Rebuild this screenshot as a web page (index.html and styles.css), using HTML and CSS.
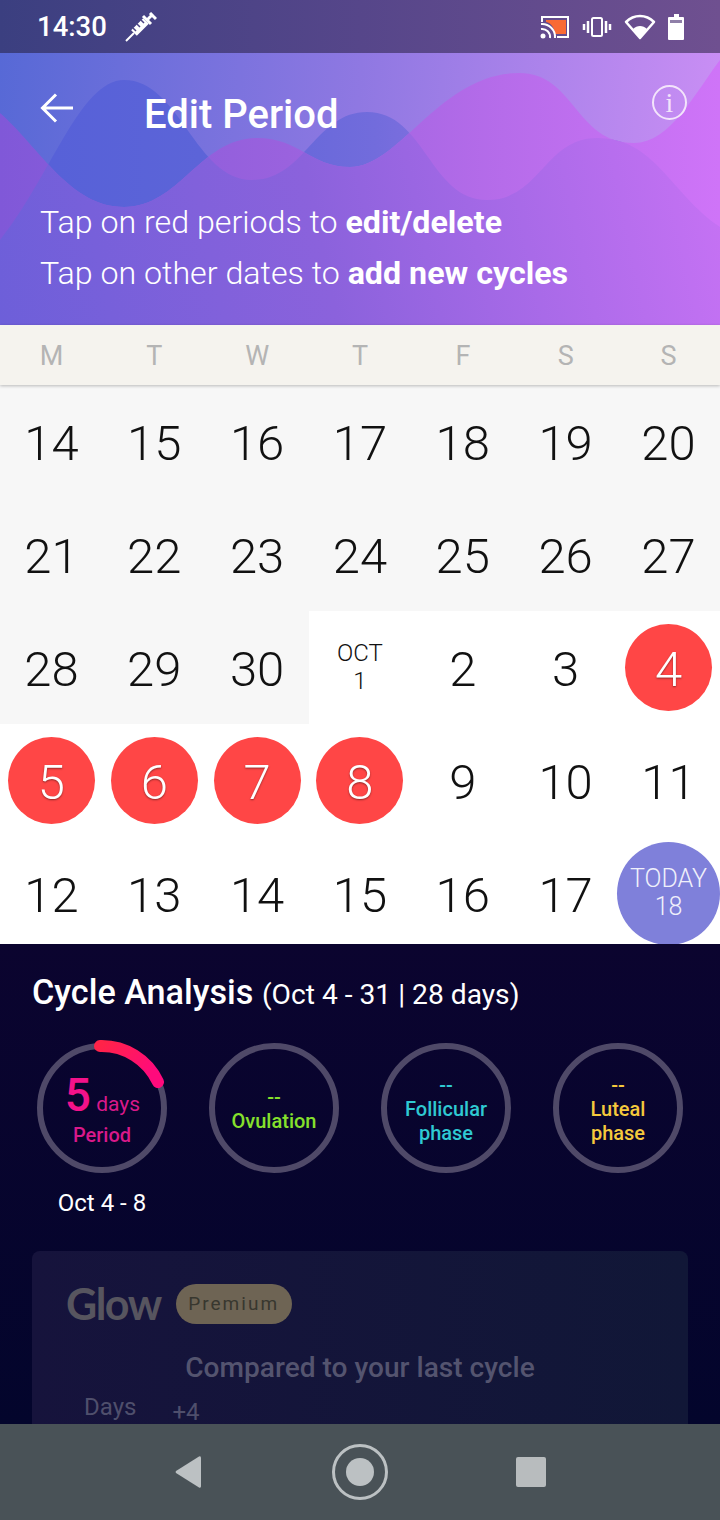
FILE: index.html
```html
<!DOCTYPE html>
<html>
<head>
    <meta charset="UTF-8">
    <title>Edit Period</title>
    <link rel="stylesheet" href="styles.css">
</head>
<body>
<div class="phone">
    <div class="status-bar">
        <div class="status-left">
            <span class="time">14:30</span>
            <svg class="syringe" width="32" height="30" viewBox="0 0 32 30">
                <path d="M1 29L9 21" stroke="#fff" stroke-width="2" fill="none"/>
                <path d="M9 21L21 9" stroke="#fff" stroke-width="8" fill="none"/>
                <path d="M23 7L28 2M25 1L31 7M18 4L26 12" stroke="#fff" stroke-width="3" fill="none"/>
                <path d="M8 16L11 19M12 12L15 15M16 8L19 11" stroke="#4a4283" stroke-width="1.5" fill="none"/>
            </svg>
        </div>
        <div class="status-right">
            <svg width="30" height="24" viewBox="0 0 30 24">
                <path d="M2 7V2H28V22H17" stroke="#fff" stroke-width="2" fill="none"/>
                <path d="M6 5H26V19H15C14 12 11 8 6 7Z" fill="#f96a35"/>
                <circle cx="3" cy="21" r="2.5" fill="#fff"/>
                <path d="M1 14A8 8 0 0 1 10 23M1 9A13 13 0 0 1 15 23" stroke="#fff" stroke-width="2" fill="none"/>
            </svg>
            <svg width="30" height="20" viewBox="0 0 30 20">
                <rect x="10" y="1" width="10" height="18" rx="1.5" stroke="#fff" stroke-width="2" fill="none"/>
                <path d="M6 4V16M24 4V16M2 7V13M28 7V13" stroke="#fff" stroke-width="2.5" fill="none"/>
            </svg>
            <svg width="32" height="26" viewBox="0 0 32 26">
                <path d="M2 8C10 0 22 0 30 8L16 24Z" stroke="#fff" stroke-width="2.5" stroke-linejoin="round" fill="none"/>
                <path d="M9 15C13 11 19 11 23 15L16 24Z" fill="#fff"/>
            </svg>
            <svg width="16" height="26" viewBox="0 0 16 26">
                <path d="M6 0H11V3H15A1 1 0 0 1 16 4V25A1 1 0 0 1 15 26H1A1 1 0 0 1 0 25V4A1 1 0 0 1 1 3H6Z" fill="#fff"/>
                <rect x="2" y="6" width="12" height="3" fill="#8f7fa8"/>
            </svg>
        </div>
    </div>

    <div class="header">
        <svg class="waves" width="720" height="272" viewBox="0 0 720 272">
            <defs>
                <linearGradient id="topGrad" gradientUnits="userSpaceOnUse" x1="0" y1="0" x2="720" y2="60">
                    <stop offset="0" stop-color="#5769d6"/>
                    <stop offset="0.5" stop-color="#8f78e2"/>
                    <stop offset="1" stop-color="#c98ef4"/>
                </linearGradient>
                <linearGradient id="blueGrad" gradientUnits="userSpaceOnUse" x1="0" y1="0" x2="500" y2="0">
                    <stop offset="0" stop-color="#5560d8"/>
                    <stop offset="0.4" stop-color="#5c64d8"/>
                    <stop offset="0.75" stop-color="#726cdc"/>
                    <stop offset="1" stop-color="#8f72e2"/>
                </linearGradient>
                <linearGradient id="pinkGrad" gradientUnits="userSpaceOnUse" x1="0" y1="0" x2="720" y2="0">
                    <stop offset="0" stop-color="#8058d8"/>
                    <stop offset="0.4" stop-color="#9a62de"/>
                    <stop offset="0.7" stop-color="#b66cea"/>
                    <stop offset="1" stop-color="#cf74f8"/>
                </linearGradient>
                <linearGradient id="baseGrad" gradientUnits="userSpaceOnUse" x1="0" y1="272" x2="720" y2="120">
                    <stop offset="0" stop-color="#6d5fd9"/>
                    <stop offset="0.45" stop-color="#8b62dc"/>
                    <stop offset="1" stop-color="#c672f4"/>
                </linearGradient>
                <clipPath id="belowFront">
                    <path d="M0 187C50 125 80 27 124 27C180 27 195 127 252 127C305 127 315 59 367 59C425 59 430 147 487 147C540 147 545 85 597 85C655 85 670 140 720 174V272H0Z"/>
                </clipPath>
            </defs>
            <rect width="720" height="272" fill="url(#topGrad)"/>
            <path d="M0 187C50 125 80 27 124 27C180 27 195 127 252 127C305 127 315 59 367 59C425 59 430 147 487 147C540 147 545 85 597 85C655 85 670 140 720 174V272H0Z" fill="url(#blueGrad)"/>
            <path d="M0 60C40 95 70 154 124 154C180 154 200 85 257 85C300 85 310 114 350 114C400 114 440 20 519 20C575 20 575 90 634 90C670 90 695 40 720 7V272H0Z" fill="url(#pinkGrad)"/>
            <path d="M0 60C40 95 70 154 124 154C180 154 200 85 257 85C300 85 310 114 350 114C400 114 440 20 519 20C575 20 575 90 634 90C670 90 695 40 720 7V272H0Z" fill="url(#baseGrad)" clip-path="url(#belowFront)"/>
        </svg>
        <div class="title-row">
            <svg class="back-arrow" width="34" height="30" viewBox="0 0 34 30">
                <path d="M33 15H3M16 1.5L2.5 15L16 28.5" stroke="#fff" stroke-width="3" fill="none"/>
            </svg>
            <h1 class="title">Edit Period</h1>
            <span class="info">i</span>
        </div>
        <p class="hint">Tap on red periods to <b>edit/delete</b></p>
        <p class="hint">Tap on other dates to <b>add new cycles</b></p>
    </div>

    <div class="weekdays">
        <span>M</span><span>T</span><span>W</span><span>T</span><span>F</span><span>S</span><span>S</span>
    </div>

    <div class="calendar">
        <div class="day past">14</div><div class="day past">15</div><div class="day past">16</div><div class="day past">17</div><div class="day past">18</div><div class="day past">19</div><div class="day past">20</div>
        <div class="day past">21</div><div class="day past">22</div><div class="day past">23</div><div class="day past">24</div><div class="day past">25</div><div class="day past">26</div><div class="day past">27</div>
        <div class="day past">28</div><div class="day past">29</div><div class="day past">30</div>
        <div class="day month-start"><span>OCT</span><span>1</span></div>
        <div class="day">2</div><div class="day">3</div>
        <div class="day"><span class="period">4</span></div>
        <div class="day"><span class="period">5</span></div><div class="day"><span class="period">6</span></div><div class="day"><span class="period">7</span></div><div class="day"><span class="period">8</span></div>
        <div class="day">9</div><div class="day">10</div><div class="day">11</div>
        <div class="day">12</div><div class="day">13</div><div class="day">14</div><div class="day">15</div><div class="day">16</div><div class="day">17</div>
        <div class="day"><span class="today"><span>TODAY</span><span>18</span></span></div>
    </div>

    <div class="analysis">
        <h2 class="analysis-title">Cycle Analysis <small>(Oct 4 - 31 | 28 days)</small></h2>
        <div class="rings">
            <div class="ring-col">
                <div class="ring">
                    <svg class="ring-svg" width="150" height="150" viewBox="0 0 150 150">
                        <defs>
                            <linearGradient id="arcGrad" x1="0" y1="0" x2="1" y2="0.6">
                                <stop offset="0" stop-color="#ff2348"/>
                                <stop offset="1" stop-color="#ff0a7c"/>
                            </linearGradient>
                        </defs>
                        <circle cx="75" cy="75" r="62" stroke="#4f4968" stroke-width="6" fill="none"/>
                        <path d="M73 13A62 62 0 0 1 131 49" stroke="url(#arcGrad)" stroke-width="12" stroke-linecap="round" fill="none"/>
                    </svg>
                    <div class="ring-label period-label">
                        <div class="period-count"><b>5</b> days</div>
                        <div class="period-name">Period</div>
                    </div>
                </div>
                <div class="ring-date">Oct 4 - 8</div>
            </div>
            <div class="ring-col">
                <div class="ring">
                    <svg class="ring-svg" width="150" height="150" viewBox="0 0 150 150"><circle cx="75" cy="75" r="62" stroke="#4f4968" stroke-width="6" fill="none"/></svg>
                    <div class="ring-label ovulation"><div>--</div><div>Ovulation</div></div>
                </div>
            </div>
            <div class="ring-col">
                <div class="ring">
                    <svg class="ring-svg" width="150" height="150" viewBox="0 0 150 150"><circle cx="75" cy="75" r="62" stroke="#4f4968" stroke-width="6" fill="none"/></svg>
                    <div class="ring-label follicular"><div>--</div><div>Follicular</div><div>phase</div></div>
                </div>
            </div>
            <div class="ring-col">
                <div class="ring">
                    <svg class="ring-svg" width="150" height="150" viewBox="0 0 150 150"><circle cx="75" cy="75" r="62" stroke="#4f4968" stroke-width="6" fill="none"/></svg>
                    <div class="ring-label luteal"><div>--</div><div>Luteal</div><div>phase</div></div>
                </div>
            </div>
        </div>

        <div class="premium-card">
            <div class="brand-row">
                <span class="glow">Glow</span>
                <span class="premium">Premium</span>
            </div>
            <div class="compare">Compared to your last cycle</div>
            <div class="days-row"><span class="days-label">Days</span><span class="days-diff">+4</span></div>
        </div>
    </div>

    <div class="nav-bar">
        <svg width="30" height="34" viewBox="0 0 30 34"><path d="M27 2.5V31.5A1.5 1.5 0 0 1 25 32.5L2 18A1.5 1.5 0 0 1 2 16L25 1.5A1.5 1.5 0 0 1 27 2.5Z" fill="#bcc1c3"/></svg>
        <svg width="58" height="58" viewBox="0 0 58 58"><circle cx="29" cy="29" r="26.5" stroke="#bcc1c3" stroke-width="3" fill="none"/><circle cx="29" cy="29" r="14" fill="#bcc1c3"/></svg>
        <span class="nav-square"></span>
    </div>
</div>
</body>
</html>
```

FILE: styles.css
```css
body {
    margin: 0;
    background-color: #0a0430;
    font-family: Roboto, "Liberation Sans", sans-serif;
}

.phone {
    width: 720px;
    height: 1520px;
    display: flex;
    flex-direction: column;
    overflow: hidden;
}

/* status bar */
.status-bar {
    height: 53px;
    flex: none;
    display: flex;
    justify-content: space-between;
    align-items: center;
    padding: 0 36px 0 37px;
    background: linear-gradient(90deg, #3b3f80, #56468a 50%, #6f5090);
    color: #fff;
}

.status-left {
    display: flex;
    align-items: center;
    gap: 18px;
}

.time {
    font-size: 27.5px;
    font-weight: 500;
}

.status-right {
    display: flex;
    align-items: center;
    gap: 12px;
}

/* header */
.header {
    position: relative;
    height: 272px;
    flex: none;
    box-sizing: border-box;
    padding: 0 40px;
    color: #fff;
}

.waves {
    position: absolute;
    top: 0;
    left: 0;
}

.title-row {
    position: relative;
    height: 144px;
    display: flex;
    align-items: center;
    padding-bottom: 29px;
    box-sizing: border-box;
}

.back-arrow {
    margin-right: 70px;
    margin-top: -6px;
}

.title {
    margin: 8px 0 0;
    font-size: 40px;
    font-weight: 500;
}

.info {
    position: absolute;
    right: -7px;
    top: 32px;
    width: 31px;
    height: 31px;
    border: 2px solid #f3e4fb;
    border-radius: 50%;
    text-align: center;
    font-family: "Liberation Serif", serif;
    font-size: 28px;
    line-height: 31px;
    color: #f3e4fb;
}

.hint {
    position: relative;
    margin: 0;
    height: 51px;
    line-height: 51px;
    font-size: 32.2px;
    font-weight: 300;
    white-space: nowrap;
}

.hint b {
    font-weight: 700;
}

/* calendar */
.weekdays {
    position: relative;
    height: 60px;
    flex: none;
    display: grid;
    grid-template-columns: repeat(7, 1fr);
    align-items: center;
    text-align: center;
    background-color: #f5f3ee;
    box-shadow: 0 1px 3px rgba(0, 0, 0, 0.25);
    color: #b4b4b4;
    font-size: 27px;
    padding-top: 1px;
    box-sizing: border-box;
}

.calendar {
    height: 559px;
    flex: none;
    overflow: hidden;
    display: grid;
    grid-template-columns: repeat(7, 1fr);
    grid-auto-rows: 113px;
    background-color: #fff;
    color: #111;
    font-size: 49px;
    font-weight: 300;
}

.day {
    display: flex;
    align-items: center;
    justify-content: center;
    text-align: center;
    padding-top: 4px;
}

.past {
    background-color: #f7f7f7;
}

.month-start {
    flex-direction: column;
    font-size: 24px;
    line-height: 28px;
    padding: 0 0 2px;
}

.period {
    width: 87px;
    height: 87px;
    margin-top: -4px;
    padding-top: 4px;
    box-sizing: border-box;
    border-radius: 50%;
    display: flex;
    align-items: center;
    justify-content: center;
    background-color: #ff4646;
    color: #fff;
    font-size: 49px;
    text-shadow: 0 1px 2px rgba(0, 0, 0, 0.45);
}

.today {
    width: 103px;
    height: 103px;
    flex: none;
    margin-top: -5px;
    border-radius: 50%;
    display: flex;
    flex-direction: column;
    align-items: center;
    justify-content: center;
    background-color: #7f80da;
    color: #f0f0fb;
    font-size: 25px;
    line-height: 28px;
    font-weight: 300;
}

/* cycle analysis */
.analysis {
    flex: 1;
    min-height: 0;
    overflow: hidden;
    box-sizing: border-box;
    padding: 28px 32px 0;
    background: linear-gradient(#0b042f, #03052c);
    color: #fff;
}

.analysis-title {
    margin: 0;
    font-size: 34.2px;
    line-height: 40px;
    font-weight: 500;
    white-space: nowrap;
}

.analysis-title small {
    font-size: 28.2px;
    font-weight: 400;
}

.rings {
    height: 208px;
    margin: 28px -16px 0;
    display: grid;
    grid-template-columns: repeat(4, 172px);
}

.ring-col {
    display: flex;
    flex-direction: column;
    align-items: center;
}

.ring {
    position: relative;
    width: 130px;
    height: 130px;
}

.ring-svg {
    position: absolute;
    left: -10px;
    top: -10px;
}

.ring-label {
    position: relative;
    height: 100%;
    box-sizing: border-box;
    padding-top: 2px;
    display: flex;
    flex-direction: column;
    align-items: center;
    justify-content: center;
    font-size: 20px;
    line-height: 24px;
    font-weight: 500;
    text-align: center;
}

.period-label {
    color: #d9198a;
}

.period-count {
    line-height: 46px;
    font-size: 21px;
    font-weight: 400;
    height: 46px;
    padding-left: 1px;
}

.period-count b {
    font-size: 46px;
    font-weight: 500;
    color: #f4128a;
}

.period-name {
    margin-top: 5px;
}

.ovulation {
    color: #85e02c;
}

.follicular {
    color: #2fc9d2;
}

.luteal {
    color: #f5c93c;
}

.ring-date {
    margin-top: 15px;
    font-size: 24px;
    line-height: 30px;
    white-space: nowrap;
}

.premium-card {
    height: 173px;
    box-sizing: border-box;
    padding: 31px 34px 0;
    border-radius: 8px 8px 0 0;
    background: linear-gradient(90deg, #16133c, #111737);
}

.brand-row {
    display: flex;
    align-items: center;
    gap: 15px;
    height: 44px;
}

.glow {
    font-family: Lato, sans-serif;
    font-size: 43px;
    font-weight: 700;
    letter-spacing: -1.5px;
    line-height: 44px;
    color: #57555f;
}

.premium {
    width: 116px;
    height: 40px;
    border-radius: 20px;
    background-color: #6e6454;
    color: #38372f;
    font-size: 19px;
    letter-spacing: 2px;
    line-height: 40px;
    text-align: center;
}

.compare {
    margin: 24px -34px 0;
    text-align: center;
    font-size: 28.1px;
    line-height: 36px;
    font-weight: 500;
    color: #54546f;
}

.days-row {
    display: flex;
    align-items: flex-start;
    margin-top: 5px;
    padding-left: 18px;
    color: #4f4f6c;
}

.days-label {
    font-size: 24px;
    line-height: 32px;
}

.days-diff {
    margin: 9px 0 0 36px;
    font-size: 24px;
    line-height: 24px;
}

/* nav bar */
.nav-bar {
    height: 96px;
    flex: none;
    display: flex;
    align-items: center;
    justify-content: center;
    gap: 127px;
    background-color: #495257;
}

.nav-square {
    width: 30px;
    height: 30px;
    border-radius: 2px;
    background-color: #b8bcbe;
}
```
